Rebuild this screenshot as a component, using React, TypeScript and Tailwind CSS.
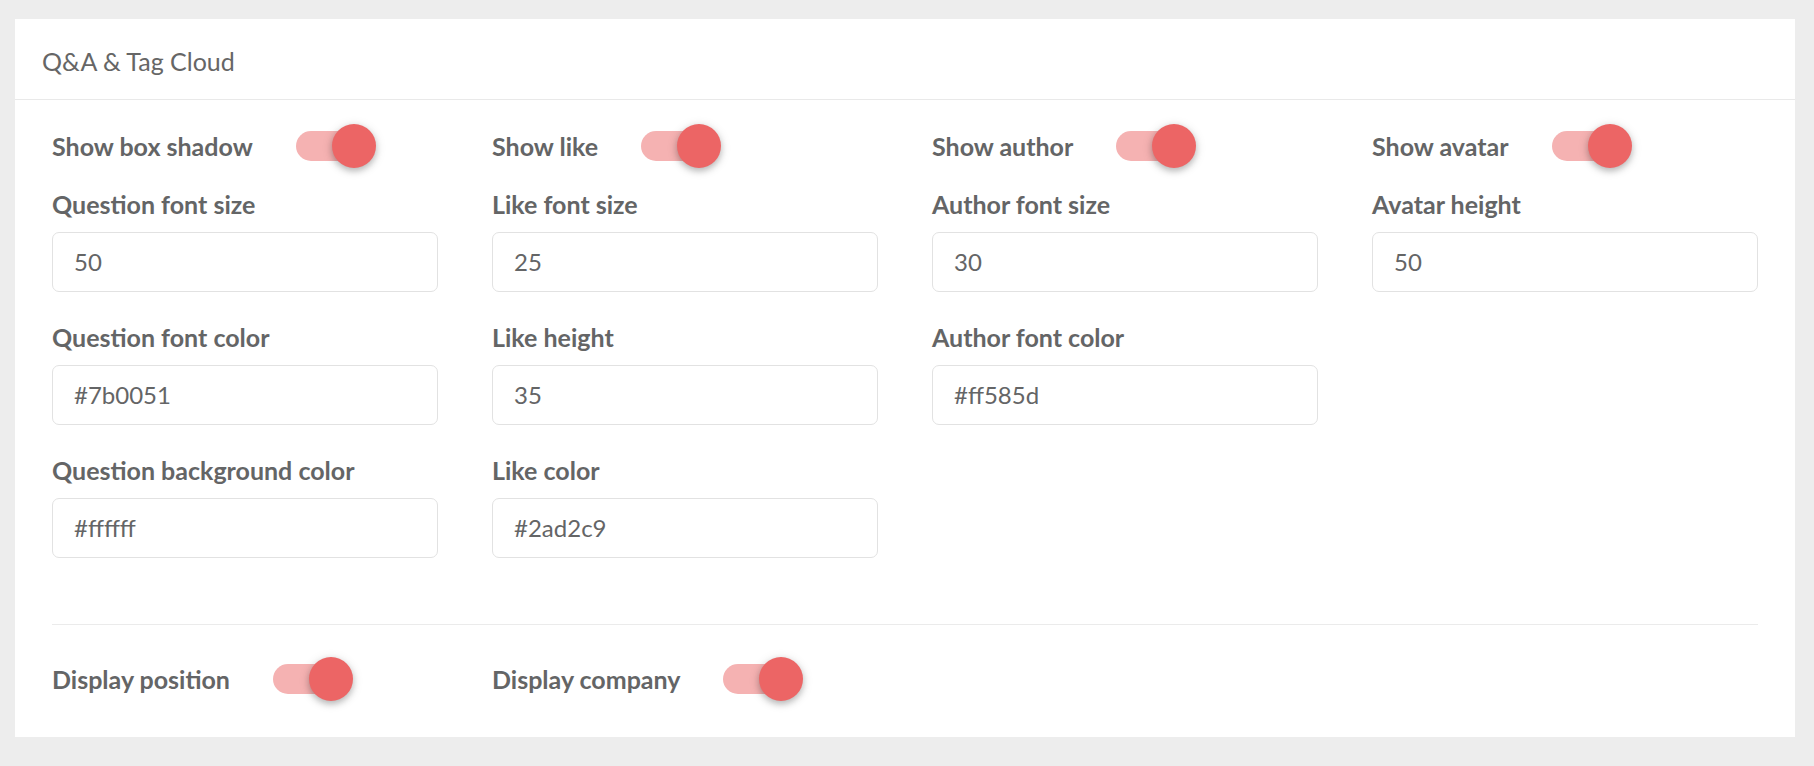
import React from "react"

function Toggle() {
  return (
    <span className="relative block h-[44px] w-[80px] shrink-0">
      <span className="absolute left-0 top-[7px] h-[30px] w-[74px] rounded-full bg-[#f5b2b2]" />
      <span className="absolute left-[36px] top-0 h-[44px] w-[44px] rounded-full bg-[#ec6565] shadow-[0_3px_6px_rgba(0,0,0,0.22),0_2px_12px_rgba(0,0,0,0.12)]" />
    </span>
  )
}

function SwitchRow({ label }: { label: string }) {
  return (
    <div className="flex h-[44px] items-center gap-[43px]">
      <span className="pt-[2px] text-[25px] font-bold text-[#646566]">{label}</span>
      <Toggle />
    </div>
  )
}

function Field({ label, value }: { label: string; value: string }) {
  return (
    <div className="mb-[30px] flex flex-col">
      <label className="mb-[13px] text-[25px] font-bold leading-[30px] text-[#646566]">{label}</label>
      <div className="flex h-[60px] items-center rounded-[7px] border border-[#e2e2e2] pl-[21px] text-[24px] text-[#646566]">
        {value}
      </div>
    </div>
  )
}

export default function App() {
  const columns = [
    {
      toggle: "Show box shadow",
      fields: [
        { label: "Question font size", value: "50" },
        { label: "Question font color", value: "#7b0051" },
        { label: "Question background color", value: "#ffffff" },
      ],
    },
    {
      toggle: "Show like",
      fields: [
        { label: "Like font size", value: "25" },
        { label: "Like height", value: "35" },
        { label: "Like color", value: "#2ad2c9" },
      ],
    },
    {
      toggle: "Show author",
      fields: [
        { label: "Author font size", value: "30" },
        { label: "Author font color", value: "#ff585d" },
      ],
    },
    {
      toggle: "Show avatar",
      fields: [{ label: "Avatar height", value: "50" }],
    },
  ]

  return (
    <div className="min-h-[766px] bg-[#ededed] pl-[15px] pr-[19px] pt-[19px] font-['Lato',sans-serif]">
      <div className="bg-white">
        <div className="flex h-[81px] items-center border-b border-[#e9e9e9] px-[27px] pt-[5px]">
          <h2 className="text-[25px] text-[#666]">Q&amp;A &amp; Tag Cloud</h2>
        </div>

        <div className="px-[37px] pt-[24px]">
          <div className="grid grid-cols-4 gap-x-[54px]">
            {columns.map((col) => (
              <div key={col.toggle} className="flex flex-col">
                <div className="mb-[21px]">
                  <SwitchRow label={col.toggle} />
                </div>
                {col.fields.map((f) => (
                  <Field key={f.label} label={f.label} value={f.value} />
                ))}
              </div>
            ))}
          </div>

          <div className="mt-[36px] border-t border-[#ebebeb] pt-[32px] pb-[36px]">
            <div className="grid grid-cols-4 gap-x-[54px]">
              <SwitchRow label="Display position" />
              <SwitchRow label="Display company" />
            </div>
          </div>
        </div>
      </div>
    </div>
  )
}
